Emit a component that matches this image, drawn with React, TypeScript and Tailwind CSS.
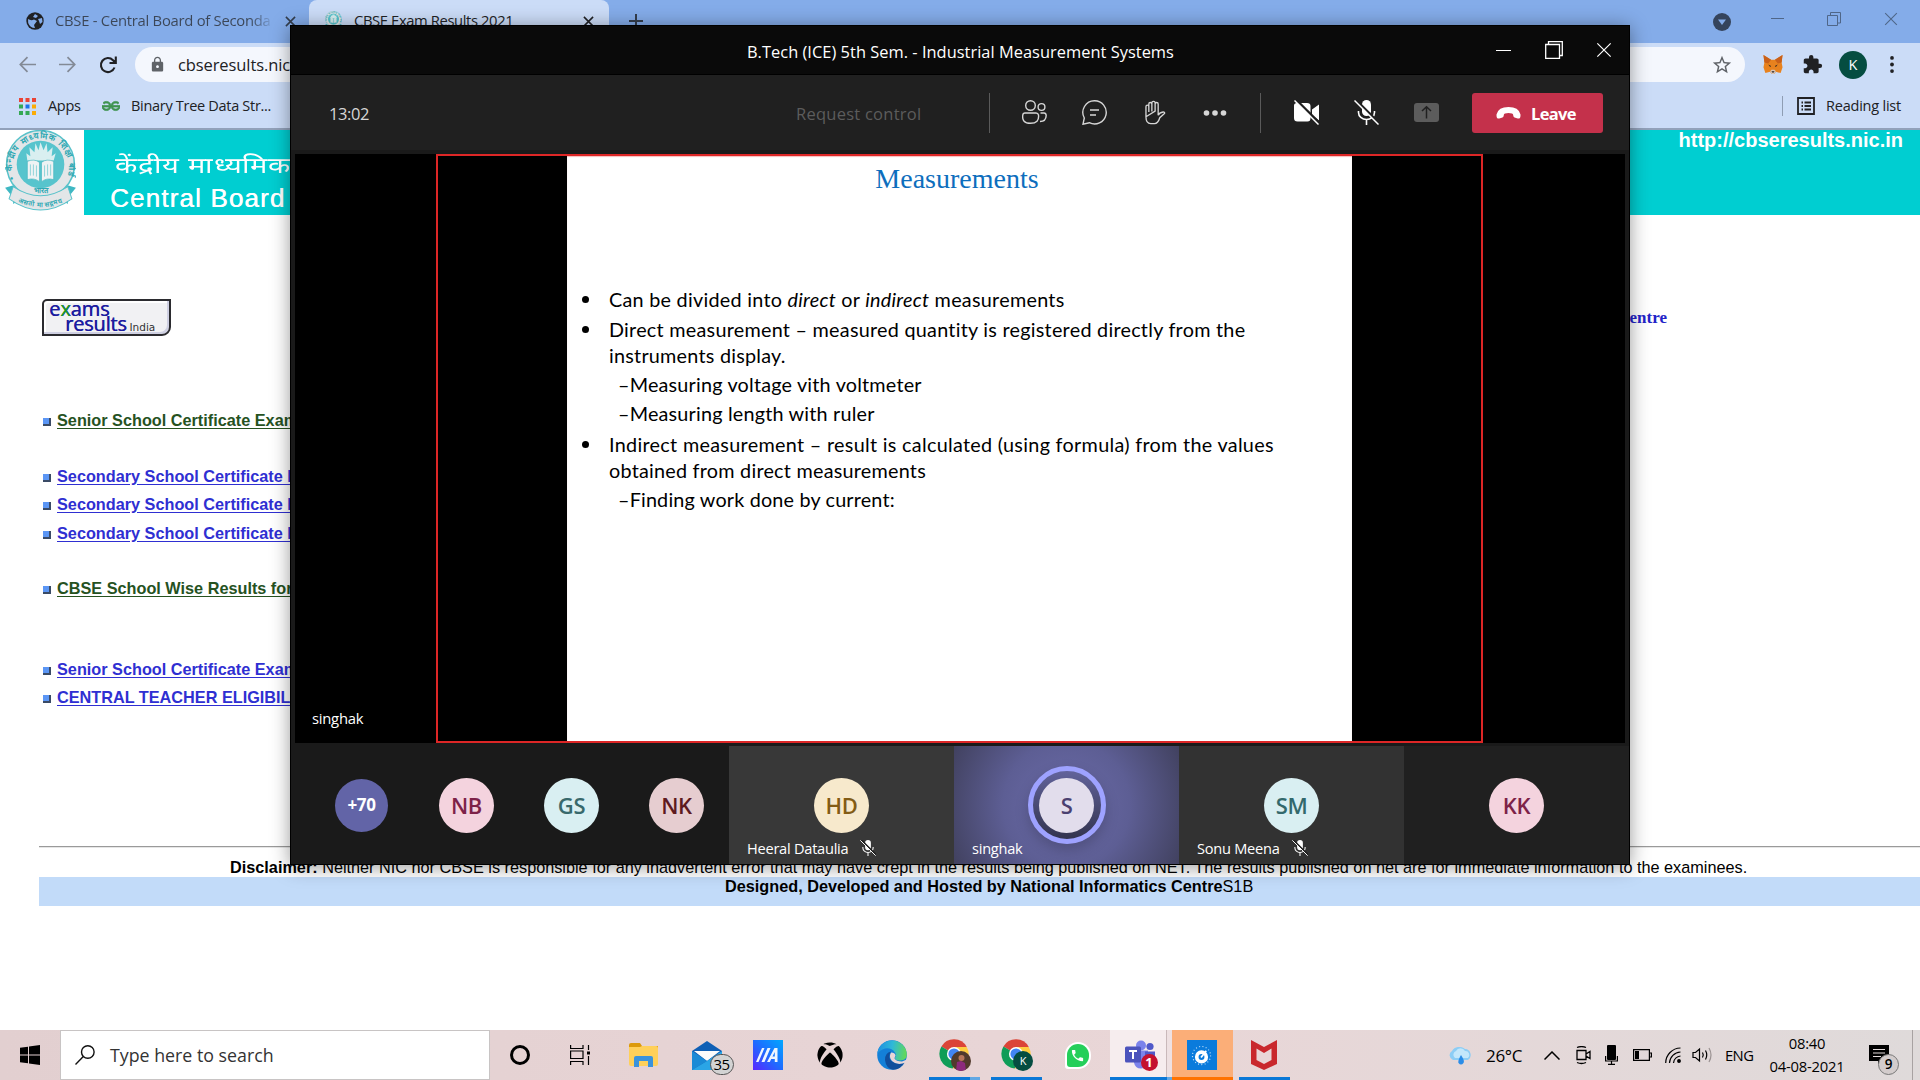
import React from "react";
import { MdStarBorder, MdExtension, MdLock, MdPhone } from "react-icons/md";
import { FaXbox } from "react-icons/fa";
import { SiGeeksforgeeks } from "react-icons/si";

const ui = "font-['Open_Sans','Noto_Sans',sans-serif]";
const arial = "font-['Liberation_Sans',Arial,sans-serif]";

function CloseX({ className }: { className: string }) {
  return (
    <svg viewBox="0 0 12 12" className={className} fill="none" stroke="currentColor">
      <path d="M1 1 11 11M11 1 1 11" />
    </svg>
  );
}

function Emblem({ className, id }: { className: string; id: string }) {
  return (
    <svg viewBox="0 0 70 80" className={className}>
      <defs>
        <path id={id + "Top"} d="M9.500 48 A28 28 0 1 1 60.500 48" />
        <path id={id + "Low"} d="M13 71 Q35 81 57 71" />
      </defs>
      <path d="M0 57 10 54 16 68 8 73 8 67ZM70 57 60 54 54 68 62 73 62 67Z" fill="#3fb8c3" />
      <circle cx="35" cy="34" r="33.500" fill="#e3e6e8" stroke="#58c2ca" strokeWidth="1.500" />
      <circle cx="35" cy="34" r="23.500" fill="#57c4cd" />
      <path d="M22 30 21 23 25 26 24 17 29 22 30 13 33 20 35 12 38 20 41 13 42 22 47 17 46 26 50 23 48 30Z" fill="#d9eff0" />
      <path d="M22 31Q29 28 34 32V51Q29 47 22 49ZM48 31Q41 28 36 32V51Q41 47 48 49Z" fill="#eef3f4" stroke="#3fb3bd" strokeWidth=".6" />
      <path d="M25 34V45M28 34V45M31 35V46M39 35V46M42 34V45M45 34V45" stroke="#7ccdd4" strokeWidth=".8" />
      <path d="M8 56Q35 74 62 56L66 68Q35 90 4 68Z" fill="#e3e6e8" stroke="#58c2ca" strokeWidth="1" />
      <text fontSize="8.500" fontWeight="700" fill="#2fa9b4">
        <textPath href={"#" + id + "Top"} textLength="116">• केन्द्रीय माध्यमिक शिक्षा बोर्ड •</textPath>
      </text>
      <text x="35" y="62" textAnchor="middle" fontSize="7.500" fontWeight="700" fill="#2fa9b4">भारत</text>
      <text fontSize="6.500" fontWeight="700" fill="#2fa9b4">
        <textPath href={"#" + id + "Low"} textLength="45">असतो मा सद्गमय</textPath>
      </text>
    </svg>
  );
}

function Fox() {
  return (
    <svg viewBox="0 0 22 22" className="h-[21px] w-[22px]">
      <path d="M1 1 9 6H13L21 1 20 9 21 14 19 20 14 18.500 12.500 21H9.500L8 18.500 3 20 1 14 2 9Z" fill="#e8821e" />
      <path d="M1 1 9 6 6 10 2 9ZM21 1 13 6 16 10 20 9Z" fill="#c9601a" />
      <path d="M8 18 9.500 21H12.500L14 18 12.500 16.500H9.500Z" fill="#d8c5b8" />
      <path d="M6 11 9 12.500 8 13.500ZM16 11 13 12.500 14 13.500ZM9.500 18H12.500L12 19.500H10Z" fill="#2b2521" />
    </svg>
  );
}

function Browser() {
  return (
    <div className={`${ui} text-[#202124]`}>
      <div className="flex h-[43px] bg-[#84ace9]">
        <div className="flex h-[42px] w-[309px] items-center pl-[26px]">
          <svg viewBox="0 0 18 18" className="h-[18px] w-[18px]">
            <circle cx="9" cy="9" r="8.700" fill="#202124" />
            <path d="M2 7Q5 9 8 7.500L11 9 8 13 9 16Q4 16 2.200 11ZM9 2 7 5 10 6 12 4ZM12 7 16 6 16.500 10 14 12 13 9Z" fill="#84ace9" />
          </svg>
          <div className="ml-[11px] w-[222px] overflow-hidden whitespace-nowrap bg-linear-to-r from-[#3b4657] from-88% to-transparent to-99% bg-clip-text pb-px text-[14.8px] tracking-[-0.26px] text-transparent">CBSE - Central Board of Seconda</div>
          <CloseX className="ml-[8px] h-[11px] w-[11px] stroke-[1.7px] text-[#333d4d]" />
        </div>
        <div className="flex h-[43px] w-[300px] items-center rounded-t-lg bg-[#cbdcf7] pb-[2px] pl-[16px]">
          <Emblem id="tab" className="h-[19px] w-[17px]" />
          <div className="ml-[12px] w-[216px] whitespace-nowrap text-[14.8px] tracking-[-0.4px]">CBSE Exam Results 2021</div>
          <CloseX className="ml-[13px] mt-px h-[11px] w-[11px] stroke-[1.7px]" />
        </div>
        <svg viewBox="0 0 14 14" className="ml-[20px] mt-[14px] h-[14px] w-[14px]" stroke="#333d4d" strokeWidth="2"><path d="M7 0V14M0 7H14" /></svg>
        <div className="ml-auto flex items-start text-[#4f6688]">
          <svg viewBox="0 0 18 18" className="mt-[13px] h-[18px] w-[18px]"><circle cx="9" cy="9" r="9" fill="#35445c" /><path d="M5 6.500H13L9 12Z" fill="#84ace9" /></svg>
          <div className="ml-[40px] mt-[18px] h-px w-[13px] bg-[#4f6688]" />
          <svg viewBox="0 0 14 14" className="ml-[43px] mt-[12px] h-[14px] w-[14px]" fill="none" stroke="currentColor"><path d="M.5 3.500H10.500V13.500H.5ZM3.500 3V.5H13.500V11H11" /></svg>
          <CloseX className="ml-[43px] mr-[22px] mt-[12px] h-[14px] w-[14px] stroke-[.9px]" />
        </div>
      </div>
      <div className="flex h-[43px] items-center bg-[#cbdcf7]">
        <svg viewBox="0 0 16 16" className="ml-[19px] h-[17px] w-[17px]" fill="none" stroke="#838a96" strokeWidth="1.600"><path d="M16 8H1.500M8 1 1.200 8 8 15" /></svg>
        <svg viewBox="0 0 16 16" className="ml-[23px] h-[17px] w-[17px]" fill="none" stroke="#838a96" strokeWidth="1.600"><path d="M0 8H14.500M8 1 14.800 8 8 15" /></svg>
        <svg viewBox="0 0 18 18" className="ml-[23px] h-[18px] w-[18px]" fill="none" stroke="#202124" strokeWidth="2.100"><path d="M15.500 11.500A7 7 0 1 1 14 4.200L16 6.200M16.800.5V7H10.500" /></svg>
        <div className="ml-[18px] flex h-[35px] w-[1610px] items-center rounded-full bg-[#f4f7fd]">
          <MdLock className="ml-[14px] h-[17px] w-[17px] text-[#5f6368]" />
          <span className="ml-[12px] whitespace-nowrap pt-[2px] text-[16.5px] tracking-[-0.1px]">cbseresults.nic.in</span>
          <MdStarBorder className="ml-auto mr-[12px] h-[22px] w-[22px] text-[#5f6368]" />
        </div>
        <div className="ml-[17px]"><Fox /></div>
        <MdExtension className="ml-[18px] h-[21px] w-[21px]" />
        <div className="ml-[16px] flex h-[28px] w-[28px] items-center justify-center rounded-full bg-[#054d41] text-[14.5px] text-white">K</div>
        <svg viewBox="0 0 4 18" className="ml-[23px] h-[17px] w-[4px]" fill="#202124"><circle cx="2" cy="2" r="2" /><circle cx="2" cy="9" r="2" /><circle cx="2" cy="16" r="2" /></svg>
      </div>
      <div className="flex h-[42px] items-center bg-[#cbdcf7] pb-[2px] text-[14.5px]">
        <svg viewBox="0 0 17 17" className="ml-[19px] h-[17px] w-[17px]">
          <path d="M0 0h4v4h-4zM6.500 0h4v4h-4zM13 0h4v4h-4z" fill="#ea4335" />
          <path d="M0 6.500h4v4h-4zM0 13h4v4h-4zM6.500 13h4v4h-4z" fill="#34a853" />
          <path d="M6.500 6.500h4v4h-4z" fill="#1a73e8" />
          <path d="M13 6.500h4v4h-4zM13 13h4v4h-4z" fill="#fbab05" />
        </svg>
        <span className="ml-[12px] w-[54px] tracking-[-0.3px]">Apps</span>
        <SiGeeksforgeeks className="h-[18px] w-[18px] stroke-[#3f9350] stroke-1 text-[#3f9350]" />
        <span className="ml-[11px] whitespace-nowrap tracking-[-0.3px]">Binary Tree Data Str...</span>
        <div className="ml-auto h-[20px] w-px bg-[#8f9db3]" />
        <svg viewBox="0 0 18 18" className="ml-[14px] h-[18px] w-[18px]" fill="none" stroke="#202124" strokeWidth="1.800"><path d="M1 1H17V17H1ZM4.500 5.500H6M7.500 5.500H14M4.500 9H6M7.500 9H14M4.500 12.500H6M7.500 12.500H14" /></svg>
        <span className="ml-[11px] mr-[19px] whitespace-nowrap text-[14.5px] tracking-[-0.22px]">Reading list</span>
      </div>
      <div className="h-[2px] bg-[#92a1ba]" />
    </div>
  );
}

const links = [
  { t: "Senior School Certificate Examination", g: true, m: "mt-[71px]" },
  { t: "Secondary School Certificate Examination", m: "mt-[28px]" },
  { t: "Secondary School Certificate Examination", m: "" },
  { t: "Secondary School Certificate Examination", m: "mt-px" },
  { t: "CBSE School Wise Results for", g: true, m: "mt-[27px]" },
  { t: "Senior School Certificate Examination", m: "mt-[53px]" },
  { t: "CENTRAL TEACHER ELIGIBILITY TEST", m: "" },
];

function Site() {
  return (
    <div className={`${arial} flex-1 text-[16.25px] text-black`}>
      <div className="flex h-[85px]">
        <div className="w-[84px] pl-[5px]"><Emblem id="main" className="h-[81px] w-[71px]" /></div>
        <div className="flex flex-1 justify-between bg-[#00ced1] text-white">
          <div className="h-[85px] w-[230px] whitespace-nowrap pl-[26px] pt-[21px]">
            <div className="w-[134px] origin-left scale-x-[1.32] pl-[4px] text-[22px] leading-[30px] tracking-[0.3px]">केंद्रीय माध्यमिक</div>
            <div className="mt-[2px] text-[26px] leading-[30px] tracking-[1.15px] [text-shadow:.4px_0_0_#fff]">Central Board</div>
          </div>
          <div className="mr-[17px] text-[20px] font-bold leading-[20px]">http://cbseresults.nic.in</div>
        </div>
      </div>
      <div className="flex h-[121px] justify-between pt-[84px]">
        <div className="ml-[42px] h-[37px] w-[129px] rounded-br-[9px] rounded-tl-[5px] border-2 border-[#2b2b2f] bg-[#f1f1f3] pl-[5px] font-['Open_Sans',sans-serif] shadow-[inset_-2px_-2px_0_#cfd0e2,inset_2px_2px_0_#fff]">
          <div className="text-[20px] leading-[16px] tracking-[-0.1px] text-[#1c1ca0] [text-shadow:.5px_0_0_#1c1ca0]">e<span className="text-[#18a018]">x</span>ams</div>
          <div className="flex items-baseline pl-[16px] leading-[14px]">
            <span className="text-[20px] leading-[14px] tracking-[-0.2px] text-[#1c1ca0] [text-shadow:.5px_0_0_#1c1ca0]">results</span>
            <span className="ml-[3px] font-['DejaVu_Sans'] text-[10.5px] leading-[14px] text-[#333]">India</span>
          </div>
        </div>
        <div className="mr-[253px] mt-[9px] whitespace-nowrap font-['Liberation_Serif',serif] text-[17px] font-bold leading-[20px] text-[#2323c8]">National Informatics Centre</div>
      </div>
      <div>
        {links.map((l, i) => (
          <div key={i} className={`${l.m} flex h-[28px] items-center pl-[43px]`}>
            <span className="mt-[2px] h-[8px] w-[8px] border-b-2 border-r-2 border-[#3a4b66] bg-[#5b96f5]" />
            <span className={`${l.g ? "text-[#26521f]" : "text-[#2f2fd2]"} ml-[6px] w-[300px] overflow-hidden whitespace-nowrap pb-px text-[16.25px] font-bold underline underline-offset-[2px]`}>{l.t}</span>
          </div>
        ))}
      </div>
      <div className="ml-[39px] mt-[134px] h-[2px] border-b border-[#e6e6e6] bg-[#9a9a9a]" />
      <div className="mt-[9px] h-[20px] whitespace-nowrap pl-[230px] leading-[20px]"><b>Disclaimer:</b> Neither NIC nor CBSE is responsible for any inadvertent error that may have crept in the results being published on NET. The results published on net are for immediate information to the examinees.</div>
      <div className="ml-[39px] h-[29px] bg-[#c2dbf9] pl-[686px] leading-[19px]"><b>Designed, Developed and Hosted by National Informatics Centre</b>S1B</div>
    </div>
  );
}

function MicOff({ className }: { className: string }) {
  return (
    <svg viewBox="0 0 25 25" className={className} fill="none">
      <rect x="8" y="0" width="9" height="16" rx="4.500" fill="currentColor" />
      <path d="M4.500 11V12.500A8 7 0 0 0 20.500 12.500V11M12.500 20V25" stroke="currentColor" strokeWidth="1.600" />
      <path d="M1.500 -.5 26 24" stroke="#202020" strokeWidth="2.500" />
      <path d="M.5 .5 24.500 24.500" stroke="currentColor" strokeWidth="1.500" />
    </svg>
  );
}

function Toolbar() {
  return (
    <div className="flex h-[75px] items-center bg-[#202020] text-[#d6d6d6]">
      <div className="ml-[38px] w-[428px] pt-[3px] text-[16.5px] tracking-[-0.4px]">13:02</div>
      <div className="w-[192px] whitespace-nowrap pl-[39px] pt-[3px] text-[16.5px] tracking-[0.25px] text-[#5c5c5c]">Request control</div>
      <div className="ml-[40px] h-[40px] w-px bg-[#5a5a5a]" />
      <svg viewBox="0 0 25 25" className="ml-[32px] h-[25px] w-[25px]" fill="none" stroke="currentColor" strokeWidth="1.400">
        <circle cx="8.500" cy="5.500" r="4.800" /><circle cx="19.500" cy="7" r="3.400" />
        <path d="M3 13H14Q16 13 16.500 15 17.500 23.300 8.500 23.300T.8 15Q1 13 3 13ZM18.500 13H22Q24 13 24.200 15.500 24 21.500 18 21.500" />
      </svg>
      <svg viewBox="0 0 25 25" className="ml-[35px] h-[25px] w-[25px]" fill="none" stroke="currentColor" strokeWidth="1.400">
        <path d="M12.500 .8A11.600 11.600 0 1 1 7.300 22.700L1 24.200 2.300 18A11.600 11.600 0 0 1 12.500 .8ZM8 10H17M8 15H14" />
      </svg>
      <svg viewBox="0 0 22 25" className="ml-[38px] h-[25px] w-[21px]" fill="none" stroke="currentColor" strokeWidth="1.400">
        <path d="M1 17V6.500Q1 4.800 2.500 4.800T4 6.500V12M4 11V3.500Q4 2 5.500 2T7.200 3.500V11.500M7.200 11V2.300Q7.200 .8 8.900 .8T10.600 2.300V11.500M10.600 11V3.500Q10.600 2 12.200 2T13.800 3.500V15.500Q15 12.500 19 12Q21 12 20.500 13.500L15.500 18Q13.500 24.200 10 24.200H6Q1 24.200 1 17Z" />
      </svg>
      <svg viewBox="0 0 24 8" className="ml-[37px] h-[8px] w-[24px]" fill="currentColor"><circle cx="3.500" cy="4" r="2.800" /><circle cx="12" cy="4" r="2.800" /><circle cx="20.500" cy="4" r="2.800" /></svg>
      <div className="ml-[33px] h-[40px] w-px bg-[#5a5a5a]" />
      <svg viewBox="0 0 25 25" className="ml-[33px] h-[25px] w-[25px] text-white" fill="none">
        <path d="M3 3H13Q16.500 3 16.500 6V18Q16.500 21.500 13.500 21.500H3.500Q0 21.500 0 18V5.500Q0 3 3 3ZM18 9.500 25 4.500V20.500L18 15Z" fill="currentColor" />
        <path d="M1.800 -.5 26 23.500" stroke="#202020" strokeWidth="2.500" /><path d="M.5 .5 24.500 24.500" stroke="currentColor" strokeWidth="1.500" />
      </svg>
      <MicOff className="ml-[35px] h-[25px] w-[25px] text-white" />
      <svg viewBox="0 0 25 19" className="ml-[35px] h-[19px] w-[25px]" fill="none"><rect width="25" height="19" rx="3" fill="#5c5c5c" /><path d="M12.500 15.500V4M8 8 12.500 3.700 17 8" stroke="#202020" strokeWidth="1.500" /></svg>
      <div className="ml-[33px] flex h-[40px] w-[131px] items-center rounded-[3px] bg-[#c4314b] pl-[24px] text-white">
        <svg viewBox="0 0 26 13" className="h-[12px] w-[25px]" fill="currentColor"><path d="M13 0Q24 0 26 8Q26.300 13 23 12.500L19.500 11.500Q18 11 18 8.500 18 6.500 13 6.500T8 8.500Q8 11 6.500 11.500L3 12.500Q-.3 13 0 8 2 0 13 0Z" /></svg>
        <span className="ml-[10px] pt-[3px] text-[16.5px] font-bold tracking-[-0.65px]">Leave</span>
      </div>
    </div>
  );
}

function Avatar({ t, c }: { t: string; c: string }) {
  return <div className={`${c} flex h-[55px] w-[55px] items-center justify-center rounded-full text-[22px] font-semibold tracking-[-0.4px]`}>{t}</div>;
}

function Tile({ bg, name, muted, children }: { bg: string; name?: string; muted?: boolean; children: React.ReactNode }) {
  return (
    <div className={`${bg} relative flex h-[118px] w-[225px] items-center justify-center`}>
      {children}
      {name && (
        <div className="absolute bottom-[6px] left-[18px] flex items-center text-[14.6px] leading-[20px] tracking-[-0.25px] text-white">
          <span className="whitespace-nowrap">{name}</span>
          {muted && <MicOff className="ml-[12px] h-[16px] w-[16px]" />}
        </div>
      )}
    </div>
  );
}

function Slide() {
  const li = "flex items-center whitespace-nowrap";
  const dot = <i className="mr-[20px] mt-px h-[7px] w-[7px] rounded-full bg-black" />;
  return (
    <div className="h-[585px] w-[785px] bg-white text-black shadow-[inset_0_1px_1px_#f5bcbc]">
      <div className="pr-[5px] pt-[6px] text-center font-['Liberation_Serif',serif] text-[28px] leading-[34px] text-[#0d6ebd]">Measurements</div>
      <div className="pl-[42px] pt-[90px] font-['Lato',sans-serif] text-[19.8px] leading-[26px] tracking-[0.24px]">
        <div className={`${li} -ml-[27px] h-[26px]`}>{dot}<span className="tracking-[0.27px]">Can be divided into <i>direct</i> or <i>indirect</i> measurements</span></div>
        <div className={`${li} -ml-[27px] mt-[4px] h-[26px]`}>{dot}<span className="tracking-[0.26px]">Direct measurement – measured quantity is registered directly from the</span></div>
        <div className="h-[26px]">instruments display.</div>
        <div className="mt-[3px] h-[26px] pl-[9px] tracking-[0.2px]">–Measuring voltage vith voltmeter</div>
        <div className="mt-[3px] h-[26px] pl-[9px] tracking-[0.2px]">–Measuring length with ruler</div>
        <div className={`${li} -ml-[27px] mt-[5px] h-[26px]`}>{dot}<span className="tracking-[0.31px]">Indirect measurement – result is calculated (using formula) from the values</span></div>
        <div className="h-[26px]">obtained from direct measurements</div>
        <div className="mt-[3px] h-[26px] pl-[9px] tracking-[0.18px]">–Finding work done by current:</div>
      </div>
    </div>
  );
}

function Meeting() {
  return (
    <div className={`${ui} absolute left-[290px] top-[25px] h-[840px] w-[1340px] border border-black bg-[#1a1a1a] shadow-[0_2px_18px_rgba(0,0,0,.4)]`}>
      <div className="flex h-[49px] items-center border-b border-black bg-[#0a0a0a] text-white">
        <div className="ml-[456px] w-[430px] whitespace-nowrap pt-[4px] text-[16.4px] tracking-[0.03px]">B.Tech (ICE) 5th Sem. - Industrial Measurement Systems</div>
        <div className="ml-[319px] h-px w-[15px] bg-white" />
        <svg viewBox="0 0 18 18" className="ml-[34px] h-[18px] w-[18px]" fill="none" stroke="currentColor" strokeWidth="1.300"><path d="M.7 3.500H14.500V17.300H.7ZM3.500 3V.7H17.300V14.500H15" /></svg>
        <CloseX className="ml-[33px] h-[16px] w-[16px] stroke-[.9px]" />
      </div>
      <Toolbar />
      <div className="mx-[4px] mt-[4px] flex h-[589px] bg-black">
        <div className="flex w-[141px] items-end pb-[15px] pl-[17px] text-[14.8px] leading-[20px] tracking-[-0.25px] text-white">singhak</div>
        <div className="flex w-[1047px] justify-center border-2 border-[#dd2626]"><Slide /></div>
      </div>
      <div className="mt-[3px] flex h-[118px]">
        <div className="flex w-[438px] items-center pl-[44px]">
          <div className="flex h-[53px] w-[53px] items-center justify-center rounded-full bg-[#6264a7] text-[17px] font-bold tracking-[-0.4px] text-white">+70</div>
          <div className="ml-[51px] flex gap-[50px]">
            <Avatar t="NB" c="bg-[#f4d3de] text-[#7d2248]" />
            <Avatar t="GS" c="bg-[#d9eff2] text-[#38696c]" />
            <Avatar t="NK" c="bg-[#e6cdd0] text-[#5e1a20]" />
          </div>
        </div>
        <Tile bg="bg-[#383838]" name="Heeral Dataulia" muted><Avatar t="HD" c="bg-[#f7e9cc] text-[#835c15]" /></Tile>
        <Tile bg="bg-[radial-gradient(circle,#6b6ba8_0%,#5d5e94_50%,#41415f_100%)]" name="singhak">
          <div className="flex h-[78px] w-[78px] items-center justify-center rounded-full border-[5px] border-[#9ea2ff] bg-linear-to-b from-[#62639b] to-[#33344f] shadow-[0_6px_14px_rgba(0,0,0,.2)]"><Avatar t="S" c="bg-[#e2ddec] text-[#4a4070]" /></div>
        </Tile>
        <Tile bg="bg-[#323232]" name="Sonu Meena" muted><Avatar t="SM" c="bg-[#d9eff2] text-[#33696c]" /></Tile>
        <Tile bg="bg-[#202020]"><Avatar t="KK" c="bg-[#f4d3de] text-[#7d2248]" /></Tile>
      </div>
    </div>
  );
}

function Chrome({ children }: { children: React.ReactNode }) {
  return (
    <div className="relative ml-[2px] h-[32px] w-[32px]">
      <svg viewBox="0 0 32 32" className="h-[30px] w-[30px]">
        <path d="M16 16 2.600 8A15.500 15.500 0 0 1 29.600 8.500Z" fill="#db4437" />
        <path d="M16 16 2.600 8A15.500 15.500 0 0 0 14.500 31.400L22 20Z" fill="#0f9d58" />
        <path d="M16 8.500H29.600A15.500 15.500 0 0 1 14.500 31.400L22 20Z" fill="#ffcd40" />
        <circle cx="16" cy="16" r="7.500" fill="#fff" /><circle cx="16" cy="16" r="6" fill="#4285f4" />
      </svg>
      <div className="absolute left-[12px] top-[12px] flex h-[20px] w-[20px] items-center justify-center overflow-hidden rounded-full">{children}</div>
    </div>
  );
}

function TaskItem({ bg = "", bar = "", w = "w-[61px]", children }: { bg?: string; bar?: string; w?: string; children?: React.ReactNode }) {
  return (
    <div className={`${bg} ${w} relative flex h-[50px] shrink-0 items-center justify-center`}>
      {children}
      {bar && <div className={`${bar} absolute bottom-0 h-[3px]`} />}
    </div>
  );
}

function Taskbar() {
  return (
    <div className={`${ui} flex h-[50px] bg-linear-to-r from-[#e2cfd0] via-[#e9d6d7] via-60% to-[#dfdada] text-black`}>
      <div className="flex w-[60px] items-center justify-center">
        <svg viewBox="0 0 20 20" className="h-[20px] w-[20px]"><path d="M0 2.800 8 1.700V9.500H0ZM9 1.500 20 0V9.500H9ZM0 10.500H8V18.300L0 17.200ZM9 10.500H20V20L9 18.500Z" /></svg>
      </div>
      <div className="flex w-[430px] items-center border border-[#c8c4c4] bg-white text-[17.8px] text-[#333]">
        <svg viewBox="0 0 20 20" className="ml-[14px] h-[20px] w-[20px]" fill="none" stroke="#111" strokeWidth="1.400"><circle cx="12.800" cy="7" r="6.300" /><path d="M8.300 11.500.5 19.500" /></svg>
        <span className="ml-[15px] whitespace-nowrap">Type here to search</span>
      </div>
      <TaskItem w="w-[60px]"><div className="h-[20px] w-[20px] rounded-full border-[3px] border-black" /></TaskItem>
      <TaskItem w="w-[60px]">
        <svg viewBox="0 0 20 20" className="h-[20px] w-[20px]" fill="none" stroke="#000" strokeWidth="1.200"><path d="M.6 0V3.500H13V0M.6 6H13V13.500H.6ZM.6 20V16.500H13V20M18.500 0V5M18.500 11V20" /><path d="M17 6.500H20V9.500H17Z" fill="#000" stroke="none" /></svg>
      </TaskItem>
      <TaskItem w="w-[66px]">
        <svg viewBox="0 0 29 24" className="h-[24px] w-[29px]"><path d="M0 2Q0 0 2 0H11L13 3H29V8H0Z" fill="#dc9a0c" /><path d="M0 4H11L13 3H27Q29 3 29 5V21Q29 23 27 23H2Q0 23 0 21Z" fill="#ffd05a" /><path d="M5 24V15Q5 13 7 13H22Q24 13 24 15V24H19V18H10V24Z" fill="#3b93dc" /></svg>
      </TaskItem>
      <TaskItem w="w-[62px]">
        <div className="relative -ml-px">
          <svg viewBox="0 0 30 29" className="h-[29px] w-[30px]"><path d="M0 10 15 0 30 10V29H0Z" fill="#0f5fb5" /><path d="M2 10H28L15 20Z" fill="#fbfbfb" /><path d="M0 10 15 20 0 29Z" fill="#1a8ad6" /><path d="M30 10 15 20 0 29H30Z" fill="#2aa5e6" /></svg>
          <div className="absolute left-[18px] top-[13px] flex h-[21px] w-[24px] items-center justify-center rounded-full border border-[#555] bg-[#d3d3d3] text-[15px] tracking-[-0.5px]">35</div>
        </div>
      </TaskItem>
      <TaskItem w="w-[60px]">
        <svg viewBox="0 0 30 30" className="h-[30px] w-[30px]"><defs><linearGradient id="ma" x1="0" y1="1" x2="1" y2="0"><stop stopColor="#5a25ff" /><stop offset=".5" stopColor="#1e6cff" /><stop offset="1" stopColor="#00a8ff" /></linearGradient></defs><path d="M0 0H30V30H0Z" fill="url(#ma)" /><path d="M3 22 9 8H11.500L5.500 22ZM8.500 22 14.500 8H17.500L11.500 22ZM14 22 21.500 8H24.500V22H21.800V19H18.200L16.800 22ZM19.500 16.500H21.800V12Z" fill="#eef6ff" fillRule="evenodd" /></svg>
      </TaskItem>
      <TaskItem w="w-[63px]"><FaXbox className="h-[26px] w-[26px]" /></TaskItem>
      <TaskItem w="w-[62px]">
        <svg viewBox="0 0 30 30" className="h-[30px] w-[30px]"><defs><linearGradient id="ed" x1="0" y1=".3" x2="1" y2=".4"><stop stopColor="#1f8fe0" /><stop offset=".5" stopColor="#2fb8d8" /><stop offset="1" stopColor="#62d957" /></linearGradient></defs>
          <circle cx="15" cy="15" r="14.800" fill="#1480d8" />
          <path d="M.3 14A14.800 14.800 0 0 1 29.800 14Q30 20.500 23 20.500 17.500 20.500 18 17.500 19.800 15.500 18 12.500 14.500 7.500 8 8.500 2.500 10 .3 14Z" fill="url(#ed)" />
          <path d="M8 20Q8 12.500 14 11.500 10.500 17 14.500 21 19.500 25.500 28 21.500 24 29.500 16 29.800 9 28.500 8 20Z" fill="#114e9c" />
          <path d="M14 12.500Q18 12.500 18.500 15.500 17.500 17.500 17.500 18.500 19 21.500 25 21.500L30 19.500 29 22.500Q20 26 15 21 11.500 17 14 12.500Z" fill="#e9d6d7" />
        </svg>
      </TaskItem>
      <TaskItem w="w-[62px]" bar="left-[6px] w-[51px] bg-linear-to-r from-[#0a78d7] from-80% to-[#62a8e4] to-80%">
        <Chrome><svg viewBox="0 0 20 20" className="h-[20px] w-[20px]"><path d="M0 0H20V20H0Z" fill="#513a2c" /><circle cx="10.500" cy="7" r="3" fill="#b7765a" /><path d="M5 20 6 11 10 10 14 12 15 20Z" fill="#8c2a7c" /></svg></Chrome>
      </TaskItem>
      <TaskItem w="w-[62px]" bar="left-[6px] w-[51px] bg-[#0a78d7]"><Chrome><div className="flex h-[20px] w-[20px] items-center justify-center bg-[#054d41] text-[11px] text-white">K</div></Chrome></TaskItem>
      <TaskItem w="w-[63px]"><div className="-ml-[2px] flex h-[27px] w-[26px] items-center justify-center rounded-[13px_13px_13px_3px] bg-white"><div className="flex h-[23px] w-[22px] items-center justify-center rounded-[11px_11px_11px_3px] bg-[#25cf5a]"><MdPhone className="h-[15px] w-[15px] text-white" /></div></div></TaskItem>
      <TaskItem w="w-[57px]" bg="bg-[#f6edee] border-r border-[#c9b9ba]" bar="left-0 w-[57px] bg-[#0a78d7]">
        <div className="relative ml-[4px]">
          <svg viewBox="0 0 31 29" className="h-[30px] w-[31px]"><circle cx="16" cy="5" r="5" fill="#7b83eb" /><circle cx="25" cy="6" r="3.600" fill="#5059c9" /><path d="M9 10H23V21Q22 28 16 28T9 22Z" fill="#7b83eb" /><path d="M20 11H30V19Q29 25 24 24L20 22Z" fill="#5059c9" /><rect y="6" width="16" height="16" rx="1.500" fill="#4b53bc" /><path d="M4 10.500H12M8 10.500V18.500" stroke="#fff" strokeWidth="2" /></svg>
          <div className="absolute left-[16px] top-[14px] flex h-[17px] w-[17px] items-center justify-center rounded-full bg-[#c4122f] text-[13px] font-bold text-white">1</div>
        </div>
      </TaskItem>
      <TaskItem w="w-[5px]" bg="bg-[#eee1e2]" bar="left-0 w-[5px] bg-[#62a8e4]" />
      <TaskItem w="w-[61px]" bg="bg-[#fbae78]" bar="left-0 w-[61px] bg-[#ff7200]">
        <div className="-ml-[2px] flex h-[30px] w-[30px] items-center justify-center bg-[#0a7bdc]">
          <svg viewBox="0 0 22 22" className="h-[21px] w-[21px]" fill="none"><circle cx="11" cy="11" r="9.500" stroke="#cfe6fa" strokeWidth="1.200" strokeDasharray="1 2.500" /><circle cx="11" cy="12.500" r="5" stroke="#fff" strokeWidth="3.800" /><path d="M10.500 13 16 6" stroke="#fff" strokeWidth="1.800" /></svg>
        </div>
      </TaskItem>
      <TaskItem w="w-[62px]" bar="left-[6px] w-[51px] bg-[#0a78d7]">
        <svg viewBox="0 0 26 30" className="h-[30px] w-[26px]"><path d="M0 0 13 7 26 0V24L13 30 0 24Z" fill="#c9282d" /><path d="M5.500 8.500 13 13 20.500 8.500V20L13 24 5.500 20Z" fill="#e9d6d7" /></svg>
      </TaskItem>
      <div className="ml-auto flex items-center">
        <svg viewBox="0 0 25 20" className="h-[20px] w-[25px]"><path d="M5 15A5 5 0 0 1 4 6 8 7 0 0 1 17 4 6 6 0 0 1 20 15Z" fill="#8ccdf5" /><path d="M7 13A4 4 0 0 1 8 6 5 5 0 0 1 17 6 4 4 0 0 1 20 13Z" fill="#c3e7fb" /><path d="M13 10Q17 16 15.500 18 13 21 10.500 18 9.500 16 13 10Z" fill="#2b8de8" /></svg>
        <span className="ml-[13px] w-[58px] pt-[2px] text-[17px] tracking-[-0.3px]">26°C</span>
        <svg viewBox="0 0 16 9" className="h-[9px] w-[16px]" fill="none" stroke="#000" strokeWidth="1.500"><path d="M.5 8.500 8 1 15.500 8.500" /></svg>
        <svg viewBox="0 0 15 19" className="ml-[16px] h-[19px] w-[15px]" fill="none" stroke="#000" strokeWidth="1.300"><path d="M1 4.500H10V13.500H1ZM10 8 14 5.500V12.500L10 10M1 1.500Q5.500 -.3 10 1.500M1 16.500Q5.500 18.500 10 16.500" /></svg>
        <svg viewBox="0 0 13 20" className="ml-[14px] h-[20px] w-[13px]"><rect x="2" width="9" height="15" rx="1" /><path d="M.6 11V16H12.400V11M6.500 16V19.400M3 19.400H10" fill="none" stroke="#000" strokeWidth="1.200" /></svg>
        <svg viewBox="0 0 19 12" className="ml-[15px] h-[12px] w-[19px]"><path d="M.6 .6H16.400V11.400H.6ZM17 4H18.400V8H17" fill="none" stroke="#000" strokeWidth="1.200" /><path d="M2 2H6V10H2Z" /></svg>
        <svg viewBox="0 0 16 16" className="ml-[13px] h-[16px] w-[16px]" fill="none" stroke="#000" strokeWidth="1.200"><path d="M.7 16A15 15 0 0 1 15.500 1M4.500 16A11.500 11.500 0 0 1 15.500 5M8.500 16A8 8 0 0 1 15.500 9" /><circle cx="14" cy="14" r="1.300" fill="#000" /></svg>
        <svg viewBox="0 0 21 16" className="ml-[11px] h-[16px] w-[21px]" fill="none" stroke="#000" strokeWidth="1.200"><path d="M1 5.500H3.500L7.500 2V14L3.500 10.500H1ZM10.500 5.500Q12 8 10.500 10.500M13.500 3.500Q16 8 13.500 12.500" /><path d="M17 1Q21 8 17 15" stroke="#9a9292" /></svg>
        <span className="ml-[12px] w-[43px] pt-px text-[14.8px] tracking-[-0.6px]">ENG</span>
        <div className="w-[78px] whitespace-nowrap text-center text-[14.8px] leading-[23px] tracking-[-0.2px]">08:40<br />04-08-2021</div>
        <div className="relative ml-[23px] mr-[23px] h-[20px] w-[20px]">
          <svg viewBox="0 0 20 20" className="h-[20px] w-[20px]"><path d="M0 0H20V16H12L9 19.500V16H0Z" /><path d="M4 4.500H16M4 8H16M4 11.500H12" stroke="#e2dada" strokeWidth="1.200" /></svg>
          <div className="absolute left-[9px] top-[9px] flex h-[21px] w-[21px] items-center justify-center rounded-full border border-[#777] bg-[#d3cccc] text-[13.5px] font-semibold">9</div>
        </div>
        <div className="mr-[7px] h-[50px] w-px bg-[#a8a2a2]" />
      </div>
    </div>
  );
}

export default function App() {
  return (
    <div className="relative flex h-[1080px] w-[1920px] flex-col overflow-hidden bg-white">
      <Browser />
      <Site />
      <Taskbar />
      <Meeting />
    </div>
  );
}
